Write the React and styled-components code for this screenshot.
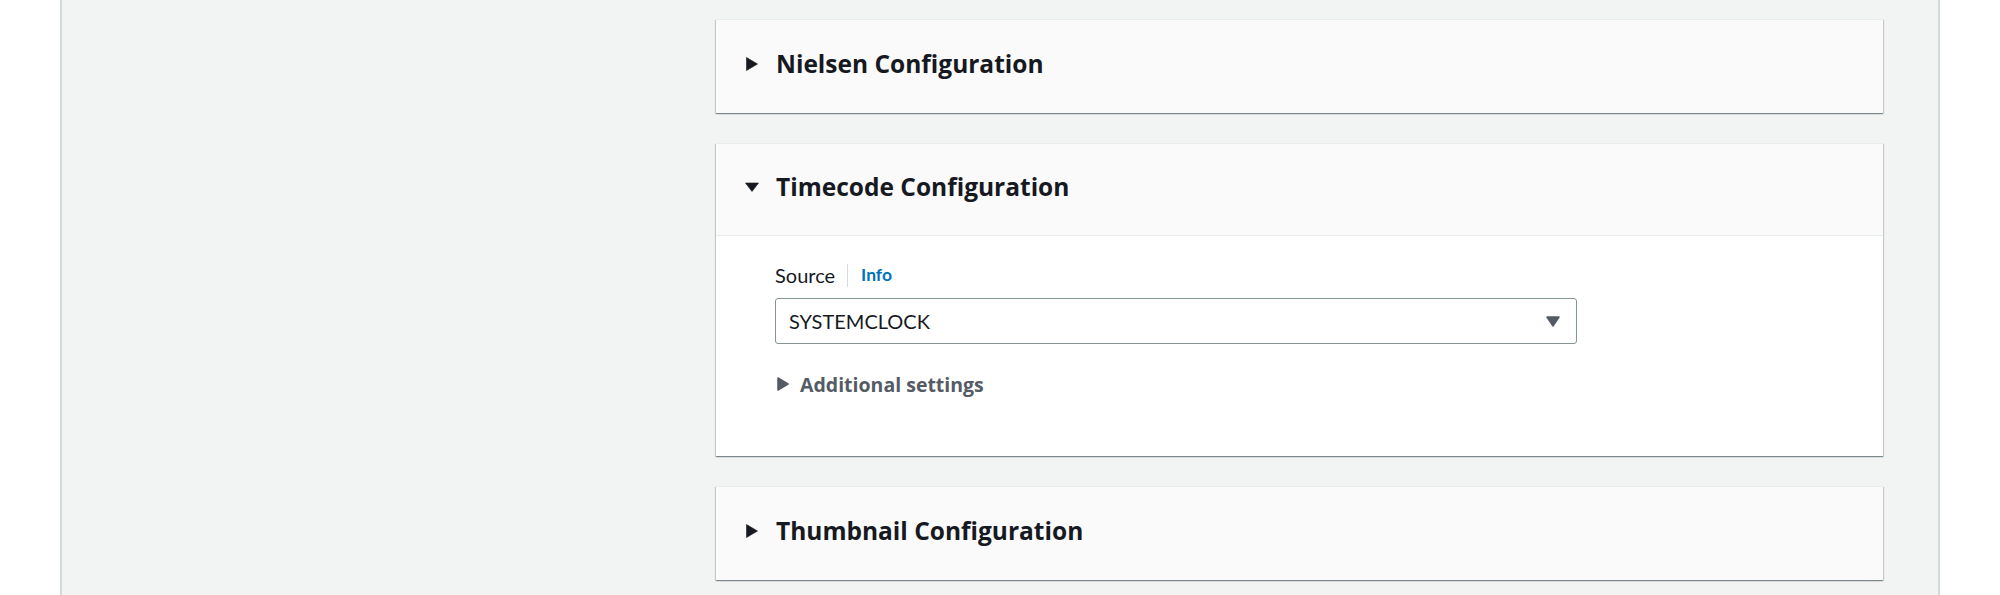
import React, { useState } from 'react';
import styled, { createGlobalStyle } from 'styled-components';

const GlobalStyle = createGlobalStyle`
  html, body {
    margin: 0;
    padding: 0;
    background: #ffffff;
    font-family: Lato, "Open Sans", Arial, sans-serif;
    color: #16191f;
  }
  * { box-sizing: border-box; }
`;

const Page = styled.div`
  padding: 0 60px;
  height: 595px;
  overflow: hidden;
`;

const Content = styled.main`
  height: 100%;
  background: #f2f3f3;
  border-left: 2px solid #d5dbdb;
  border-right: 2px solid #d5dbdb;
  padding: 19px 55px 0 654px;
  display: flex;
  flex-direction: column;
  gap: 30px;
`;

const Panel = styled.section`
  background: #ffffff;
  border-top: 1px solid #eaeded;
  box-shadow: 0 1px 1px 0 rgba(0, 28, 36, 0.3),
    1px 1px 1px 0 rgba(0, 28, 36, 0.15),
    -1px 1px 1px 0 rgba(0, 28, 36, 0.15);
`;

const Header = styled.button`
  display: flex;
  align-items: center;
  gap: 17px;
  width: 100%;
  height: ${p => (p.open ? '92px' : '93px')};
  padding: 0 0 5px 29px;
  background: #fafafa;
  border: none;
  border-bottom: ${p => (p.open ? '1px solid #eaeded' : 'none')};
  cursor: pointer;
  text-align: left;
  font-family: inherit;
`;

const Title = styled.h2`
  margin: 0;
  font-family: "Open Sans", Lato, Arial, sans-serif;
  font-size: 24.5px;
  font-weight: 700;
  line-height: 32px;
  color: #16191f;
`;

const Body = styled.div`
  padding: 25px 59px 58px;
`;

const LabelRow = styled.div`
  display: flex;
  align-items: center;
  height: 28px;
  margin-bottom: 9px;
`;

const Label = styled.label`
  font-size: 20px;
  line-height: 28px;
  color: #16191f;
`;

const Divider = styled.span`
  width: 1px;
  height: 23px;
  background: #d5dbdb;
  margin: 0 13px 0 12px;
`;

const InfoLink = styled.a`
  font-size: 17.5px;
  font-weight: 700;
  color: #0073bb;
  text-decoration: none;
  line-height: 28px;
`;

const Select = styled.div`
  display: flex;
  align-items: center;
  justify-content: space-between;
  width: 802px;
  height: 46px;
  padding: 0 16px 0 13px;
  border: 1px solid #879596;
  border-radius: 3px;
  background: #ffffff;
  font-size: 20px;
  line-height: 24px;
  color: #16191f;
`;

const Expander = styled.div`
  display: flex;
  align-items: center;
  gap: 11px;
  margin-top: 26px;
  padding-left: 2px;
  height: 28px;
  font-family: "Open Sans", Lato, Arial, sans-serif;
  font-size: 19.5px;
  font-weight: 700;
  color: #545b64;
  cursor: pointer;
`;

const Caret = ({ open, color = '#16191f' }) => (
  <svg width="14" height="14" viewBox="0 0 14 14">
    {open ? (
      <polygon points="0.5,3 13.5,3 7,11.5" fill={color} stroke={color} strokeWidth="0.6" strokeLinejoin="round" />
    ) : (
      <polygon points="1.5,0.5 12.5,7 1.5,13.5" fill={color} stroke={color} strokeWidth="0.6" strokeLinejoin="round" />
    )}
  </svg>
);

const Section = ({ title, defaultOpen, children }) => {
  const [open, setOpen] = useState(defaultOpen);
  return (
    <Panel>
      <Header open={open} onClick={() => setOpen(!open)}>
        <Caret open={open} />
        <Title>{title}</Title>
      </Header>
      {open && <Body>{children}</Body>}
    </Panel>
  );
};

export default function App() {
  return (
    <>
      <GlobalStyle />
      <Page>
        <Content>
          <Section title="Nielsen Configuration" />
          <Section title="Timecode Configuration" defaultOpen>
            <LabelRow>
              <Label>Source</Label>
              <Divider />
              <InfoLink href="#">Info</InfoLink>
            </LabelRow>
            <Select>
              <span>SYSTEMCLOCK</span>
              <svg width="14" height="11" viewBox="0 0 14 11">
                <polygon points="1,1 13,1 7,10" fill="#545b64" stroke="#545b64" strokeWidth="1.5" strokeLinejoin="round" />
              </svg>
            </Select>
            <Expander>
              <svg width="12" height="14" viewBox="0 0 12 14">
                <polygon points="1,1 11,7 1,13" fill="#545b64" stroke="#545b64" strokeWidth="1.5" strokeLinejoin="round" />
              </svg>
              Additional settings
            </Expander>
          </Section>
          <Section title="Thumbnail Configuration" />
        </Content>
      </Page>
    </>
  );
}
